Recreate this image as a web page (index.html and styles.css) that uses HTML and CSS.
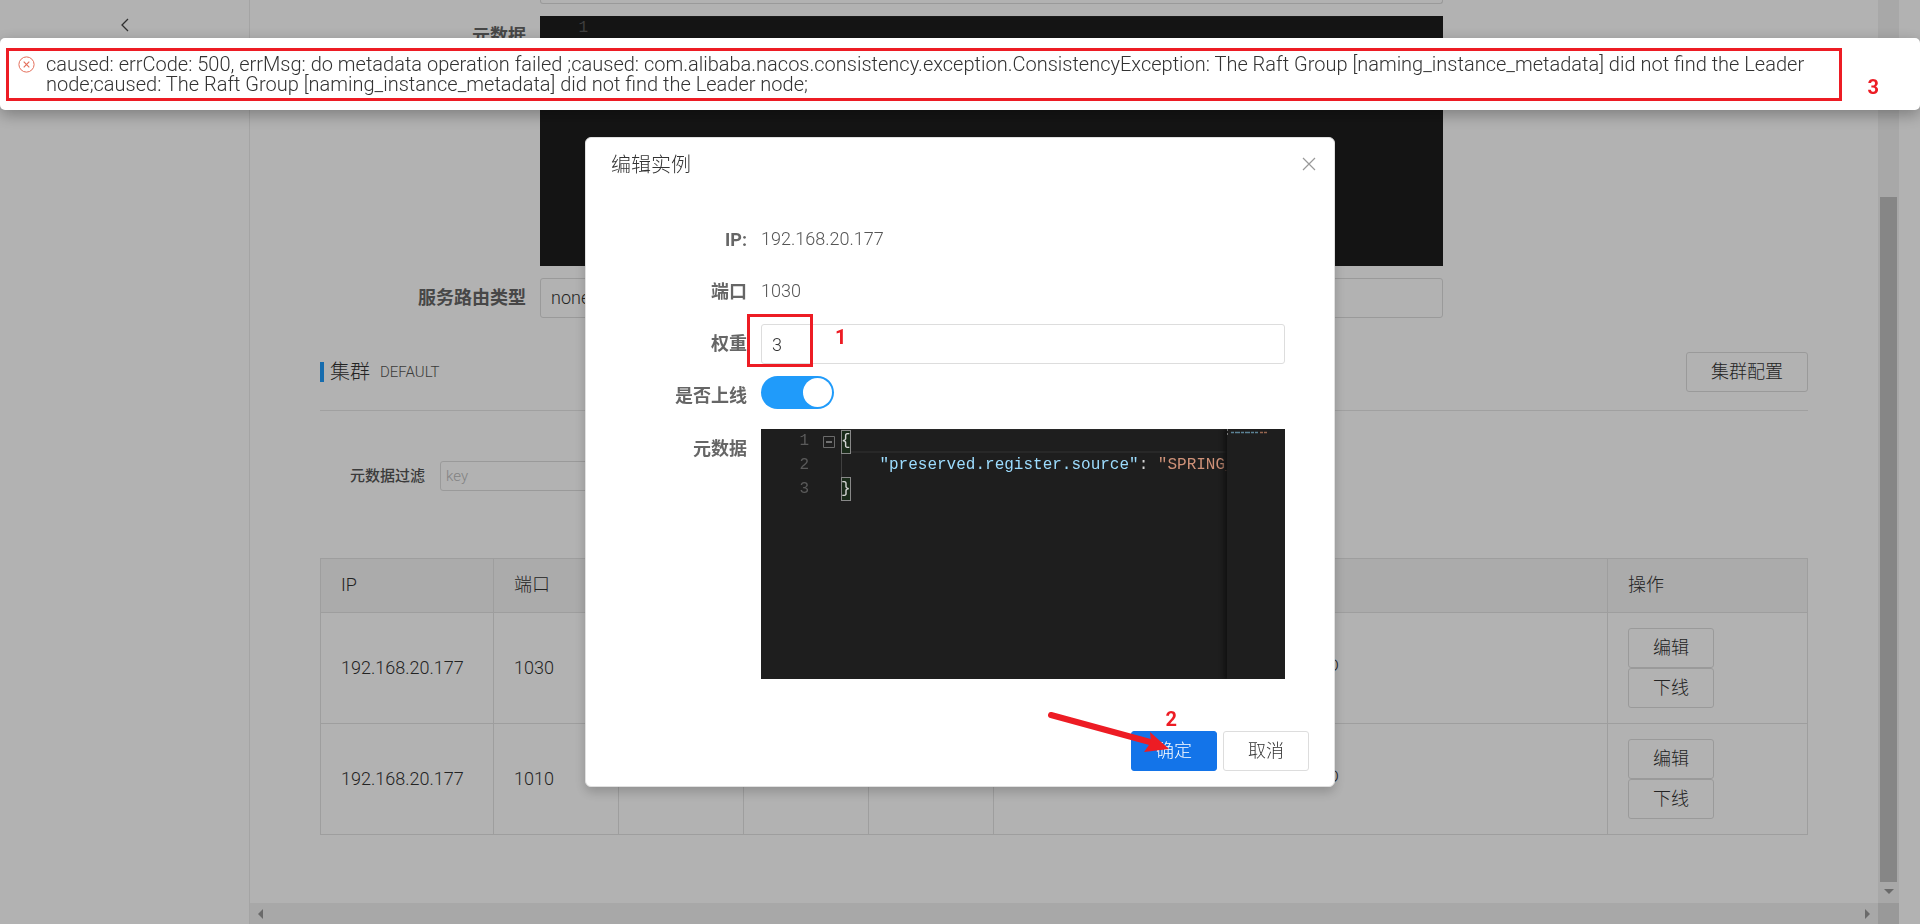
FILE: index.html
```html
<!DOCTYPE html>
<html lang="zh-CN">
<head>
<meta charset="utf-8">
<title>服务详情</title>
<link rel="stylesheet" href="styles.css">
</head>
<body>
<div class="app">
  <aside class="sidebar">
    <button class="back" type="button" aria-label="返回">
      <svg width="10" height="14" viewBox="0 0 10 14"><path d="M8 1 L2 7 L8 13" fill="none" stroke="#444" stroke-width="1.300"/></svg>
    </button>
  </aside>
  <main class="main">
    <div class="form-row">
      <div class="field-tail"></div>
    </div>
    <div class="form-row">
      <span class="label">元数据</span>
      <div class="editor">
        <div class="gutter"><span>1</span></div>
        <div class="code"><div class="code-line current"></div></div>
        <div class="minimap plain"></div>
      </div>
    </div>
    <div class="form-row">
      <label class="label" for="route">服务路由类型</label>
      <select class="control" id="route"><option>none</option></select>
    </div>

    <header class="cluster">
      <h2 class="cluster-title">集群</h2>
      <span class="cluster-name">DEFAULT</span>
      <button class="btn" type="button">集群配置</button>
    </header>

    <div class="filter">
      <label class="filter-label" for="key">元数据过滤</label>
      <input class="filter-input" id="key" type="text" placeholder="key">
    </div>

    <table class="table">
      <colgroup><col class="c-ip"><col class="c-sm"><col class="c-sm"><col class="c-sm"><col class="c-sm"><col><col class="c-op"></colgroup>
      <thead>
        <tr><th>IP</th><th>端口</th><th>临时实例</th><th>权重</th><th>健康状态</th><th>元数据</th><th>操作</th></tr>
      </thead>
      <tbody>
        <tr>
          <td>192.168.20.177</td><td>1030</td><td>true</td><td>1</td><td>true</td>
          <td class="meta">preserved.register.source=SPRING_CLOUD</td>
          <td><div class="ops"><button class="btn" type="button">编辑</button><button class="btn" type="button">下线</button></div></td>
        </tr>
        <tr>
          <td>192.168.20.177</td><td>1010</td><td>true</td><td>1</td><td>true</td>
          <td class="meta">preserved.register.source=SPRING_CLOUD</td>
          <td><div class="ops"><button class="btn" type="button">编辑</button><button class="btn" type="button">下线</button></div></td>
        </tr>
      </tbody>
    </table>
  </main>
  <div class="vbar">
    <div class="vthumb"></div>
    <svg class="varrow" width="10" height="6" viewBox="0 0 10 6"><path d="M0 0H10L5 5Z" fill="#999"/></svg>
  </div>
  <div class="hbar">
    <svg width="5" height="10" viewBox="0 0 5 10"><path d="M5 0V10L0 5Z" fill="#999"/></svg>
    <svg width="5" height="10" viewBox="0 0 5 10"><path d="M0 0V10L5 5Z" fill="#999"/></svg>
  </div>
  <div class="corner"></div>
</div>

<div class="overlay">
  <section class="dialog" role="dialog" aria-labelledby="dlg-title">
    <header class="dialog-head">
      <h1 class="dialog-title" id="dlg-title">编辑实例</h1>
      <button class="close" type="button" aria-label="关闭">
        <svg width="14" height="14" viewBox="0 0 14 14"><path d="M1 1L13 13M13 1L1 13" fill="none" stroke="#999" stroke-width="1.2"/></svg>
      </button>
    </header>
    <div class="dialog-body">
      <div class="item"><span class="label">IP:</span><span class="value">192.168.20.177</span></div>
      <div class="item"><span class="label">端口</span><span class="value">1030</span></div>
      <div class="item">
        <label class="label" for="weight">权重</label>
        <div class="marked">
          <input class="control" id="weight" type="text" value="3">
          <span class="mark-box"></span>
          <span class="mark mark-one">1</span>
        </div>
      </div>
      <div class="item">
        <label class="label" for="online">是否上线</label>
        <input class="switch" id="online" type="checkbox" checked>
      </div>
      <div class="item">
        <span class="label">元数据</span>
        <div class="editor">
          <div class="gutter"><span>1</span><span>2</span><span>3</span></div>
          <svg class="fold" width="12" height="24" viewBox="0 0 12 24"><path d="M.5 7.500H11.500V18.500H.5Z" fill="none" stroke="#6b6b6b"/><path d="M3 13H9" stroke="#c5c5c5"/></svg>
          <div class="code">
            <div class="code-line current"><span class="bracket">{</span></div>
            <div class="code-line indent"><span class="key">    "preserved.register.source"</span>: <span class="str">"SPRING_CLOUD"</span></div>
            <div class="code-line"><span class="bracket">}</span></div>
          </div>
          <div class="minimap">
            <svg width="50" height="6" viewBox="0 0 50 6"><path d="M.5 0V2M.5 4V6" stroke="#777"/><path d="M4 3.500H31" stroke="#5b8295" stroke-width="1.600" stroke-dasharray="3 1 5 1"/><path d="M33 3.500H40" stroke="#96664f" stroke-width="1.600" stroke-dasharray="3 1"/></svg>
          </div>
        </div>
      </div>
    </div>
    <footer class="dialog-foot">
      <button class="btn primary" type="button">确定</button>
      <button class="btn" type="button">取消</button>
      <span class="mark mark-two">2</span>
      <svg class="arrow" width="124" height="46" viewBox="0 0 124 46"><path d="M5 7L104 34" stroke="#ed1c24" stroke-width="6" stroke-linecap="round"/><path d="M123 41L104 24L105 34L98 44Z" fill="#ed1c24"/></svg>
    </footer>
  </section>
</div>

<div class="toast" role="alert">
  <svg class="toast-icon" width="17" height="17" viewBox="0 0 17 17"><g fill="none" stroke="#e4705c"><circle cx="8.500" cy="8.500" r="7.600"/><path d="M5.700 5.700L11.300 11.300M11.300 5.700L5.700 11.300" stroke-width="1.200"/></g></svg>
  <p class="toast-text">caused: errCode: 500, errMsg: do metadata operation failed ;caused: com.alibaba.nacos.consistency.exception.ConsistencyException: The Raft Group [naming_instance_metadata] did not find the Leader node;caused: The Raft Group [naming_instance_metadata] did not find the Leader node;</p>
  <span class="toast-box"></span>
  <span class="mark mark-three">3</span>
</div>
</body>
</html>
```
FILE: styles.css
```css
* { box-sizing: border-box; }

body {
  margin: 0;
  overflow: hidden;
  font-family: Roboto, "Noto Sans CJK SC", sans-serif;
  font-size: 18px;
  font-weight: 300;
  line-height: 24px;
  color: #333;
  background: #fff;
}

button, input, select { font: inherit; color: inherit; }
h1, h2, p { margin: 0; font-weight: 300; }

.app {
  display: grid;
  grid-template-columns: 250px minmax(0, 1fr) 21px 21px;
  grid-template-rows: minmax(0, 1fr) 21px;
  height: 100vh;
}

.sidebar {
  grid-row: 1 / 3;
  display: flex;
  justify-content: center;
  align-items: flex-start;
  padding-top: 18px;
  border-right: 1px solid #ebebeb;
}
.back, .close {
  display: flex;
  padding: 0;
  border: 0;
  background: none;
}

.main { overflow: hidden; padding: 0 70px; }

.form-row {
  display: grid;
  grid-template-columns: 220px 903fr 365fr;
  margin-bottom: 12px;
}
.label {
  padding: 8px 14px 8px 0;
  text-align: right;
  font-weight: 700;
  color: #666;
}
.field-tail {
  grid-column: 2;
  height: 4px;
  border: 1px solid #ddd;
  border-top: 0;
  border-radius: 0 0 3px 3px;
}
.control {
  width: 100%;
  height: 40px;
  padding: 0 10px;
  border: 1px solid #ddd;
  border-radius: 3px;
  background: #fff;
  appearance: none;
}

.editor {
  display: flex;
  height: 250px;
  overflow: hidden;
  background: #1e1e1e;
  color: #d4d4d4;
  font: 16px/24px "Liberation Mono", monospace;
}
.gutter {
  display: flex;
  flex-direction: column;
  flex: 0 0 48px;
  text-align: right;
  color: #5a5a5a;
}
.fold { flex: none; margin: 0 6px 0 14px; }
.gutter + .code { margin-left: 32px; }
.code { flex: 1; min-width: 0; overflow: hidden; }
.code-line { height: 24px; white-space: pre; }
.current { border: solid #282828; border-width: 1px 0 2px; line-height: 22px; }
.indent { box-shadow: inset 1px 0 #404040; }
.bracket {
  display: inline-block;
  height: 24px;
  background: #1a2b1a;
  box-shadow: inset 0 0 0 1px #888;
}
.key { color: #9cdcfe; }
.str { color: #ce9178; }
.minimap { flex: 0 0 58px; box-shadow: -3px 0 4px #111; }
.minimap svg { display: block; }
.plain { flex-basis: 93px; box-shadow: none; }

.cluster {
  display: flex;
  align-items: center;
  margin-top: 34px;
  padding-bottom: 18px;
  border-bottom: 1px solid #e6e6e6;
}
.cluster-title {
  padding-left: 6px;
  border-left: 4px solid #209bfa;
  font-size: 20px;
  line-height: 20px;
}
.cluster-name { margin-left: 10px; font-size: 15px; color: #555; }
.cluster .btn { margin-left: auto; }

.btn {
  height: 40px;
  padding: 0 24px;
  border: 1px solid #ddd;
  border-radius: 3px;
  background: #fff;
}
.primary { border-color: #1374e9; background: #1374e9; color: #fff; }

.filter {
  display: flex;
  align-items: center;
  margin: 50px 0 67px 30px;
}
.filter-label { margin-right: 15px; font-size: 15px; font-weight: 500; color: #555; }
.filter-input {
  width: 250px;
  height: 30px;
  padding: 0 5px;
  border: 1px solid #ddd;
  border-radius: 3px;
  font-size: 15px;
}
.filter-input::placeholder { color: #bbb; }

.table {
  width: 100%;
  table-layout: fixed;
  border-collapse: collapse;
}
.c-ip { width: 173px; }
.c-sm { width: 125px; }
.c-op { width: 200px; }
.table th, .table td {
  padding: 15px 20px;
  border: 1px solid #e3e3e3;
  text-align: left;
  font-weight: 300;
}
.table th { padding-top: 14px; background: #f5f5f5; }
.table .meta { padding: 15px 28px 21px; font-size: 17px; }
.ops { display: flex; flex-direction: column; align-items: flex-start; }

.vbar {
  grid-area: 1 / 3;
  display: flex;
  flex-direction: column;
  align-items: center;
  background: #f1f1f1;
}
.vthumb { width: 17px; height: 685px; margin-top: auto; background: #c1c1c1; }
.varrow { margin: 7px 0 8px; }
.hbar {
  grid-area: 2 / 2;
  display: flex;
  align-items: center;
  justify-content: space-between;
  padding: 0 8px;
  background: #f1f1f1;
}
.corner { grid-area: 2 / 3; background: #dcdcdc; }

.overlay {
  position: fixed;
  inset: 0;
  display: flex;
  justify-content: center;
  align-items: center;
  background: rgba(0, 0, 0, .3);
}
.dialog {
  width: 750px;
  padding: 15px 25px;
  border: 1px solid #e0e0e0;
  border-radius: 6px;
  background: #fff;
  box-shadow: 0 5px 12px rgba(0, 0, 0, .2);
}
.dialog-head { display: flex; justify-content: space-between; }
.dialog-title { font-size: 20px; }
.close { margin: 4px -7px 0 0; height: 14px; }
.dialog-body {
  display: flex;
  flex-direction: column;
  gap: 12px;
  padding: 43px 24px 52px 0;
}
.item { display: grid; grid-template-columns: 150px minmax(0, 1fr); }
.value { padding: 7px 0 9px; color: #555; }
.switch {
  width: 73px;
  height: 33px;
  margin: 0 0 8px;
  padding: 2px;
  border-radius: 17px;
  background: #209bfa;
  appearance: none;
}
.switch::before {
  content: "";
  display: block;
  width: 29px;
  height: 29px;
  margin-left: auto;
  border-radius: 50%;
  background: #fff;
}
.dialog-foot {
  position: relative;
  display: flex;
  justify-content: flex-end;
  gap: 6px;
}

.mark {
  position: absolute;
  font-size: 20px;
  font-weight: 700;
  color: #ed1c24;
}
.marked { position: relative; }
.mark-box {
  position: absolute;
  top: -10px;
  left: -14px;
  width: 66px;
  height: 53px;
  border: 3px solid #ed1c24;
}
.mark-one { top: 1px; left: 74px; }
.mark-two { top: -24px; right: 132px; }
.arrow { position: absolute; top: -23px; right: 139px; }

.toast {
  position: fixed;
  top: 38px;
  left: 0;
  right: 0;
  display: flex;
  align-items: flex-start;
  padding: 16px 100px 16px 18px;
  border-radius: 5px;
  background: #fff;
  box-shadow: 0 5px 16px rgba(0, 0, 0, .3);
}
.toast-icon { flex: none; margin: 2px 11px 0 0; }
.toast-text { font-size: 20px; line-height: 20px; }
.toast-box {
  position: absolute;
  inset: 10px 78px 9px 6px;
  border: 3px solid #ed1c24;
}
.mark-three { top: 37px; right: 41px; }
```
